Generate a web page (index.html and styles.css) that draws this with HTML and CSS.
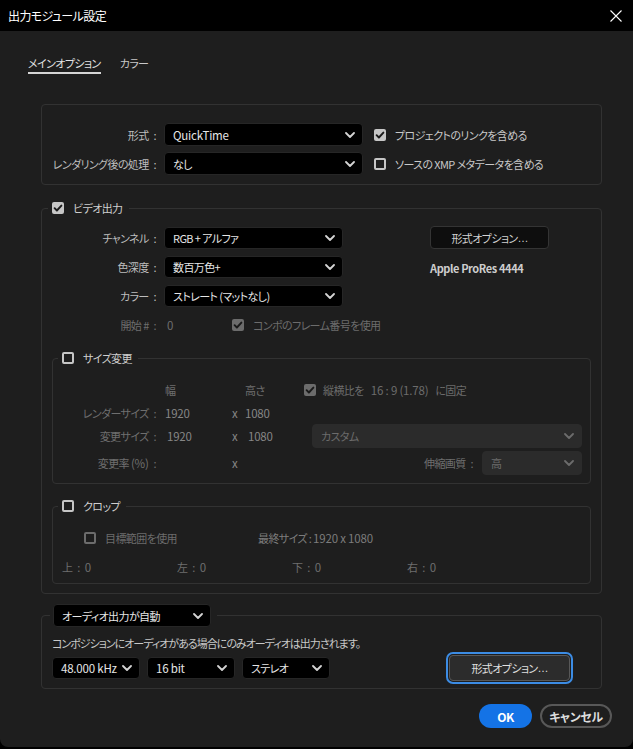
FILE: index.html
```html
<!DOCTYPE html>
<html lang="ja">
<head>
    <meta charset="UTF-8">
    <meta name="viewport" content="width=device-width, initial-scale=1.0">
    <title>出力モジュール設定</title>
    <link rel="stylesheet" href="styles.css">
</head>
<body>
<div class="window">
    <div class="titlebar">
        <span>出力モジュール設定</span>
        <svg class="close" width="12" height="12" viewBox="0 0 12 12"><path d="M0.5 0.5L11.5 11.5M11.5 0.5L0.5 11.5" stroke="#fff" stroke-width="1.1" fill="none"/></svg>
    </div>

    <div class="tabs">
        <span class="tab active">メインオプション</span>
        <span class="tab">カラー</span>
    </div>

    <div class="content">
        <!-- 形式 -->
        <div class="box format-box">
            <div class="row">
                <span class="lbl">形式&ensp;:</span>
                <div class="select sel-format"><span class="en">QuickTime</span> <svg class="chev" width="10" height="6" viewBox="0 0 10 6"><path d="M1 1l4 4 4-4"/></svg></div>
                <span class="check"><span class="cb on"><svg width="12" height="12" viewBox="0 0 12 12"><path d="M2.6 6.2l2.3 2.3 4.5-4.9"/></svg></span>プロジェクトのリンクを含める</span>
            </div>
            <div class="row">
                <span class="lbl">レンダリング後の処理&ensp;:</span>
                <div class="select sel-format">なし <svg class="chev" width="10" height="6" viewBox="0 0 10 6"><path d="M1 1l4 4 4-4"/></svg></div>
                <span class="check"><span class="cb"></span>ソースの XMP メタデータを含める</span>
            </div>
        </div>

        <!-- ビデオ出力 -->
        <fieldset class="group video">
            <legend><span class="legend-in"><span class="cb on"><svg width="12" height="12" viewBox="0 0 12 12"><path d="M2.6 6.2l2.3 2.3 4.5-4.9"/></svg></span>ビデオ出力</span></legend>
            <div class="video-top">
                <div class="vfields">
                    <div class="vrow">
                        <span class="lbl">チャンネル&ensp;:</span>
                        <div class="select sel-video">RGB + アルファ <svg class="chev" width="10" height="6" viewBox="0 0 10 6"><path d="M1 1l4 4 4-4"/></svg></div>
                    </div>
                    <div class="vrow">
                        <span class="lbl">色深度&ensp;:</span>
                        <div class="select sel-video">数百万色+ <svg class="chev" width="10" height="6" viewBox="0 0 10 6"><path d="M1 1l4 4 4-4"/></svg></div>
                    </div>
                    <div class="vrow">
                        <span class="lbl">カラー&ensp;:</span>
                        <div class="select sel-video">ストレート (マットなし) <svg class="chev" width="10" height="6" viewBox="0 0 10 6"><path d="M1 1l4 4 4-4"/></svg></div>
                    </div>
                </div>
                <div class="side">
                    <div class="btn-opt">形式オプション<span class="dots">…</span></div>
                    <div class="codec">Apple ProRes 4444</div>
                </div>
            </div>
            <div class="start-row dim">
                <span class="lbl">開始 #&ensp;:</span>
                <span class="start-val en">0</span>
                <span class="check dis"><span class="cb on dis"><svg width="12" height="12" viewBox="0 0 12 12"><path d="M2.6 6.2l2.3 2.3 4.5-4.9"/></svg></span>コンポのフレーム番号を使用</span>
            </div>

            <!-- サイズ変更 -->
            <fieldset class="group sub">
                <legend><span class="legend-in"><span class="cb"></span>サイズ変更</span></legend>
                <div class="size-body dim">
                    <div class="srow head">
                        <span class="lbl2"></span>
                        <span class="w">幅</span>
                        <span class="x"></span>
                        <span class="h">高さ</span>
                        <span class="check dis"><span class="cb on dis"><svg width="12" height="12" viewBox="0 0 12 12"><path d="M2.6 6.2l2.3 2.3 4.5-4.9"/></svg></span>縦横比を <span class="en">16 : 9 (1.78)</span> に固定</span>
                    </div>
                    <div class="srow render">
                        <span class="lbl2">レンダーサイズ&ensp;:</span>
                        <span class="w val en">1920</span>
                        <span class="x val en">x</span>
                        <span class="h val en">1080</span>
                    </div>
                    <div class="srow tall">
                        <span class="lbl2">変更サイズ&ensp;:</span>
                        <span class="w val en edit">1920</span>
                        <span class="x val en">x</span>
                        <span class="h val en edit">1080</span>
                        <div class="select disabled sel-custom">カスタム <svg class="chev" width="10" height="6" viewBox="0 0 10 6"><path d="M1 1l4 4 4-4"/></svg></div>
                    </div>
                    <div class="srow tall">
                        <span class="lbl2">変更率 <span class="en">(%)</span>&ensp;:</span>
                        <span class="w"></span>
                        <span class="x val en">x</span>
                        <span class="h"></span>
                        <span class="quality">伸縮画質&ensp;:</span>
                        <div class="select disabled sel-quality">高 <svg class="chev" width="10" height="6" viewBox="0 0 10 6"><path d="M1 1l4 4 4-4"/></svg></div>
                    </div>
                </div>
            </fieldset>

            <!-- クロップ -->
            <fieldset class="group sub crop">
                <legend><span class="legend-in"><span class="cb"></span>クロップ</span></legend>
                <div class="crop-body dim">
                    <div class="crop-row1">
                        <span class="check dis"><span class="cb dis"></span>目標範囲を使用</span>
                        <span class="final">最終サイズ : <span class="en">1920 x 1080</span></span>
                    </div>
                    <div class="crop-row2">
                        <span class="side-val">上&ensp;: <b class="en">0</b></span>
                        <span class="side-val">左&ensp;: <b class="en">0</b></span>
                        <span class="side-val">下&ensp;: <b class="en">0</b></span>
                        <span class="side-val">右&ensp;: <b class="en">0</b></span>
                    </div>
                </div>
            </fieldset>
        </fieldset>

        <!-- オーディオ -->
        <fieldset class="group audio">
            <legend><div class="select sel-audio">オーディオ出力が自動 <svg class="chev" width="10" height="6" viewBox="0 0 10 6"><path d="M1 1l4 4 4-4"/></svg></div></legend>
            <div class="audio-body">
                <div class="desc">コンポジションにオーディオがある場合にのみオーディオは出力されます。</div>
                <div class="audio-row">
                    <div class="select sel-small"><span class="en">48.000 kHz</span> <svg class="chev" width="10" height="6" viewBox="0 0 10 6"><path d="M1 1l4 4 4-4"/></svg></div>
                    <div class="select sel-small"><span class="en">16 bit</span> <svg class="chev" width="10" height="6" viewBox="0 0 10 6"><path d="M1 1l4 4 4-4"/></svg></div>
                    <div class="select sel-small">ステレオ <svg class="chev" width="10" height="6" viewBox="0 0 10 6"><path d="M1 1l4 4 4-4"/></svg></div>
                    <div class="focus-ring"><div class="btn-focus">形式オプション<span class="dots">…</span></div></div>
                </div>
            </div>
        </fieldset>
    </div>

    <div class="footer">
        <button class="btn-ok">OK</button>
        <button class="btn-cancel">キャンセル</button>
    </div>
</div>
</body>
</html>
```

FILE: styles.css
```css
* { box-sizing: border-box; }
html, body { margin: 0; background: #000; }
body { font-family: "Noto Sans CJK JP", "Noto Sans", sans-serif; font-size: 11px; line-height: 16px; letter-spacing: -0.6px; color: #bdbdbd; font-feature-settings: "palt"; }
.en { font-size: 11.5px; letter-spacing: -0.2px; }
.dots { font-family: "Liberation Sans", sans-serif; letter-spacing: -1px; }

.window { width: 633px; height: 747px; background: #1e1e1e; border-radius: 0 0 8px 8px; overflow: hidden; }
.titlebar { height: 31px; background: #000; color: #fff; font-size: 12px; display: flex; align-items: center; justify-content: space-between; padding: 0 11px 0 8px; }

.tabs { display: flex; gap: 19px; padding: 24px 0 0 28px; }
.tab { color: #c8c8c8; padding-bottom: 1px; border-bottom: 2px solid transparent; }
.tab.active { color: #e2e2e2; border-bottom-color: #d6d6d6; }

.content { margin: 30px 31px 0 41px; }

/* generic controls */
.lbl { width: 114px; flex: none; text-align: right; white-space: nowrap; }
.select { display: flex; align-items: center; justify-content: space-between; background: #000; border: 1px solid #262626; border-radius: 4px; color: #e6e6e6; padding: 0 7px 0 8px; white-space: nowrap; }
.chev { flex: none; fill: none; stroke: #d4d4d4; stroke-width: 1.8; stroke-linecap: round; stroke-linejoin: round; }
.select.disabled { background: #2b2b2b; border-color: #2b2b2b; color: #6c6c6c; }
.select.disabled .chev { stroke: #6c6c6c; }

.check { display: flex; align-items: center; gap: 9px; color: #c8c8c8; white-space: nowrap; }
.cb { width: 12px; height: 12px; flex: none; border: 2px solid #c6c6c6; border-radius: 2px; display: flex; align-items: center; justify-content: center; }
.cb.on { background: #c6c6c6; border: none; }
.cb svg { fill: none; stroke: #1a1a1a; stroke-width: 1.9; stroke-linecap: round; stroke-linejoin: round; }
.cb.dis { border-color: #6c6c6c; }
.cb.on.dis { background: #6c6c6c; }
.check.dis { color: #6c6c6c; }
.dim { color: #6e6e6e; }

/* 形式 */
.box { border: 1px solid #323232; border-radius: 4px; padding: 18px 0 9px; }
.row { display: flex; align-items: center; height: 23px; }
.row + .row { margin-top: 6px; }
.sel-format { margin-left: 8px; width: 199px; height: 23px; }
.row .check { margin-left: 11px; }

/* group boxes */
.group { margin: 0; padding: 0; min-width: 0; border: 1px solid #323232; border-radius: 4px; }
.group legend { padding: 0 6px 0 4px; }
.legend-in { display: flex; align-items: center; gap: 9px; height: 16px; color: #cfcfcf; }
.video { margin-top: 15px; padding-bottom: 9px; }
.video > legend { margin-left: 6px; }

.video-top { display: flex; align-items: flex-start; padding-top: 10px; }
.vfields { margin-top: 1px; display: flex; flex-direction: column; gap: 7px; }
.vrow { display: flex; align-items: center; height: 22px; }
.sel-video { margin-left: 8px; width: 179px; height: 22px; }
.side { margin-left: 87px; }
.btn-opt { width: 119px; height: 23px; background: #0e0e0e; border: 1px solid #343434; border-radius: 4px; color: #d2d2d2; display: flex; align-items: center; justify-content: center; }
.codec { margin-top: 11px; color: #cdcdcd; font-weight: 700; letter-spacing: -0.4px; }

.start-row { display: flex; align-items: center; height: 16px; margin-top: 10px; }
.start-val { margin-left: 11px; width: 65px; }

.sub { margin: 17px 10px 0; }
.sub > legend { margin-left: 5px; }
.size-body { padding: 16px 8px 8px 0; }
.srow { display: flex; align-items: center; }
.srow.head { height: 16px; }
.srow.render { height: 16px; margin-top: 7px; }
.srow.tall { height: 24px; margin-top: 3px; }
.lbl2 { width: 103px; flex: none; text-align: right; white-space: nowrap; }
.w { margin-left: 8px; width: 68px; flex: none; padding-left: 1px; }
.x { width: 13px; flex: none; }
.h { width: 59px; flex: none; }
.val { color: #868686; }
.edit { padding-left: 3px; }
.srow.head .check { gap: 7px; }
.sel-custom { margin-left: 8px; width: 270px; height: 24px; }
.quality { margin-left: auto; margin-right: 9px; }
.sel-quality { width: 100px; height: 24px; }

.crop { margin-top: 14px; }
.crop-body { padding: 16px 0 8px; }
.crop-row1 { display: flex; align-items: center; height: 16px; padding-left: 31px; }
.crop-row1 .check { gap: 9px; width: 174px; }
.final { color: #7c7c7c; }
.crop-row2 { display: flex; height: 16px; margin-top: 13px; padding-left: 9px; }
.side-val { width: 115px; }
.side-val b { font-weight: 400; margin-left: 3px; }

/* オーディオ */
.audio { margin-top: 10px; }
.audio > legend { margin-left: 8px; padding: 0 6px 0 3px; }
.sel-audio { width: 158px; height: 23px; }
.audio-body { padding: 8px 28px 4px 10px; }
.desc { color: #c8c8c8; letter-spacing: -1px; }
.audio-row { display: flex; align-items: center; gap: 7px; margin-top: 1px; }
.sel-small { width: 88px; height: 22px; }
.focus-ring { margin-left: auto; width: 127px; height: 32px; border: 2px solid #3c8ce4; border-radius: 7px; padding: 1px; }
.btn-focus { height: 100%; background: #2c2c2c; border: 1px solid #585858; border-radius: 4px; color: #e0e0e0; display: flex; align-items: center; justify-content: center; }

.footer { display: flex; justify-content: flex-end; gap: 8px; padding: 15px 21px 0 0; }
.footer button { font-family: inherit; font-size: 12px; font-weight: 700; height: 24px; border-radius: 12px; padding: 0; font-feature-settings: "palt"; letter-spacing: -0.4px; }
.btn-ok { width: 53px; background: #1473e6; border: none; color: #fff; }
.btn-cancel { width: 72px; background: transparent; border: 2px solid #585858; color: #dcdcdc; }
```
